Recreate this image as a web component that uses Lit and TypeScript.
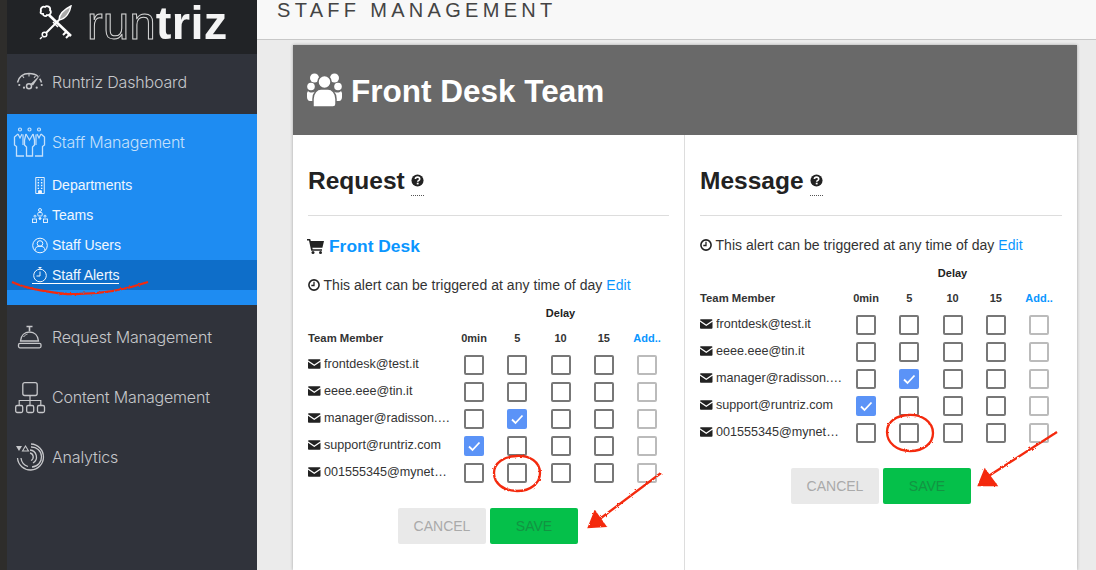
import { LitElement, html, css, svg } from "lit";
import { customElement } from "lit/decorators.js";

const envelope = html`<svg class="env" viewBox="0 0 13 10"><path fill="#222" d="M1.2 0h10.6c.7 0 1.2.5 1.2 1.1L6.5 5.6 0 1.1C0 .5.5 0 1.2 0z"/><path fill="#222" d="M0 2.6l6.5 4.4L13 2.6v6.2c0 .7-.5 1.2-1.2 1.2H1.2C.5 10 0 9.500 0 8.800z"/></svg>`;
const clock = html`<svg class="clk" viewBox="0 0 12 12"><circle cx="6" cy="6" r="5.100" fill="none" stroke="#222" stroke-width="1.600"/><path d="M6 2.800V6.500H3.300" fill="none" stroke="#222" stroke-width="1.300"/></svg>`;
const question = html`<span class="q"><svg viewBox="0 0 14 14" width="13" height="13"><circle cx="7" cy="7" r="6.500" fill="#222"/><path d="M4.700 5.400C4.800 4 5.800 3.400 7 3.400c1.300 0 2.400.8 2.400 2 0 1.800-2.200 1.700-2.200 3" fill="none" stroke="#fff" stroke-width="1.700"/><rect x="6.200" y="9.400" width="2" height="1.800" fill="#fff"/></svg></span>`;

const stroke = (s: unknown) => html`<svg class="ico" viewBox="0 0 30 30" fill="none" stroke="currentColor" stroke-width="1.200">${s}</svg>`;

const icons = {
  gauge: stroke(svg`<path d="M2.500 15.500C4 9.500 8.500 6.500 14 6.500c4 0 7 1 9 3" stroke-width="1.500"/><path d="M26.500 15.500c-.4-1.500-1-2.700-1.800-3.800" stroke-width="1.500"/><path d="M14 7v2.500M7.500 9l1.500 1.800M20.500 9L19 10.800" stroke-width="1.100"/><path d="M15.500 17L25.500 7.500l-7.500 11z" fill="currentColor" stroke="none"/><circle cx="14" cy="19.300" r="2.500" stroke-width="1.500"/><circle cx="4.300" cy="18" r="1.100" fill="currentColor" stroke="none"/><circle cx="9" cy="20.700" r="1.100" fill="currentColor" stroke="none"/><circle cx="21.700" cy="20.700" r="1.100" fill="currentColor" stroke="none"/><circle cx="26.700" cy="18" r="1.100" fill="currentColor" stroke="none"/>`),
  staff: stroke(svg`<circle cx="5" cy="2.500" r="1.500"/><circle cx="14.500" cy="2.500" r="1.500"/><circle cx="24" cy="2.500" r="1.500"/>
    <path d="M3 7L-.5 10v8l2 1.500V29H9" stroke-width="1.300"/><path d="M3 7l2 4 2-4" />
    <path d="M8 7.500V18" /><path d="M11 7l3.500 6 3.500-6" /><path d="M11 7L9.500 13v5l2 2v9h6v-9l2-2v-5L18 7" stroke-width="1.300"/>
    <path d="M22 7l2 4 2-4" /><path d="M21 7.500V18" /><path d="M26 7l3.500 3v8l-2 1.500V29H20" stroke-width="1.300"/>`),
  bell: stroke(svg`<path d="M11.500 4.500h6M14.500 4.500V9" stroke-width="1.600"/><path d="M5.500 19C6 13.500 9.500 10 14.500 10s8.500 3.500 9 9z" stroke-width="1.300"/><path d="M8.500 15c1-1.500 2.300-2.400 4-2.900" stroke-width="1"/><rect x="3.500" y="21.300" width="22.500" height="4.500" rx="1.500" stroke-width="1.300"/>`),
  net: stroke(svg`<rect x="7.800" y=".7" width="14.400" height="12.800" rx="2" stroke-width="1.300"/><path d="M15 13.500V23M4.200 23v-4.500h21.600V23"/><rect x=".7" y="23.500" width="7" height="7" rx="1.500" stroke-width="1.300"/><rect x="11.700" y="23.500" width="7" height="7" rx="1.500" stroke-width="1.300"/><rect x="22.500" y="23.500" width="7" height="7" rx="1.500" stroke-width="1.300"/>`),
  analytics: stroke(svg`<path d="M1 4h6L4 9z" fill="currentColor" stroke="none"/><path d="M7.500 9l3-5 3 5z" stroke-width="1.100"/><path d="M16 2a13 13 0 1 1-13.500 14" stroke-width="1.300"/><path d="M16 5a10 10 0 0 1 1 20" stroke-width="1.300"/><path d="M15 8a7 7 0 0 1 3 13" stroke-width="1.300"/><path d="M6 16a10 10 0 0 0 7 8.500" stroke-width="1.300"/><path d="M15 11a4 4 0 0 1 1 7.500" stroke-width="1.300"/>`),
  building: html`<svg class="sub-ico" viewBox="0 0 16 18" fill="none" stroke="currentColor"><path d="M3.500 .5h9v17h-9z"/><path d="M5.500 3h1.500M9 3h1.500M5.500 6h1.500M9 6h1.500M5.500 9h1.500M9 9h1.500M5.500 12h1.500M9 12h1.500" stroke-width="1.500"/><path d="M6.500 17.500v-3h3v3" fill="currentColor"/></svg>`,
  teams: html`<svg class="sub-ico" viewBox="0 0 16 16" fill="none" stroke="currentColor" stroke-width=".9"><circle cx="8" cy="2.500" r="1.500"/><rect x="5.800" y="5" width="4.400" height="3.500" rx="1"/><rect x=".5" y="11.500" width="4" height="3.500"/><rect x="11.500" y="11.500" width="4" height="3.500"/><circle cx="3" cy="8.700" r="1"/><circle cx="13" cy="8.700" r="1"/><circle cx="8" cy="11" r="1" fill="currentColor"/></svg>`,
  user: html`<svg class="sub-ico" viewBox="0 0 16 16" fill="none" stroke="currentColor"><circle cx="8" cy="8" r="7.300"/><circle cx="8" cy="6" r="2.800"/><path d="M3 13c0-3 2-4.300 5-4.300S13 10 13 13"/></svg>`,
  timer: html`<svg class="sub-ico" viewBox="0 0 16 16" fill="none" stroke="currentColor"><circle cx="8" cy="9" r="6.300"/><path d="M8 1v2M6.500 1h3M8 5v4.500H4.500"/></svg>`,
};

const logoMark = html`<svg class="mark" viewBox="0 0 34 36" fill="none" stroke="#fff">
  <path d="M11 10l22 21" stroke-width="2.600"/>
  <path d="M25 30l3-3M28 33l3-3" stroke-width="2"/>
  <path d="M3 6c-1-3 2-5 4-4 2-2 6 0 5 3 2 2 0 6-3 5-1 2-4 1-4-1-2 0-3-1-2-3z" stroke-width="1.800"/>
  <path d="M8 28L21 15" stroke-width="2"/>
  <path d="M15 17l5 5" stroke-width="1.600"/>
  <path d="M21 15c0-7 6-11 12-14-1 6-5 13-12 14z" fill="#aaa" stroke-width="1.400"/>
  <circle cx="6.500" cy="29.500" r="2.300" stroke-width="1.500"/><path d="M2 34l2-2" stroke-width="1.400"/></svg>`;

const Row = (name: string, checked: number) => html`
  <div class="name">${envelope}<span>${name}</span></div>
  ${[0, 1, 2, 3, 4].map(i => html`<div class="cell"><span class="box ${i === checked ? "on" : ""} ${i === 4 ? "dim" : ""}">
    ${i === checked ? html`<svg viewBox="0 0 20 20" width="20" height="20"><path d="M5 10.500l3.500 3.500 7-7.500" fill="none" stroke="#fff" stroke-width="1.800"/></svg>` : ""}
  </span></div>`)}
`;

@customElement("app-root")
export class AppRoot extends LitElement {
  static styles = css`
    :host { display: block; width: 1096px; height: 570px; overflow: hidden; position: relative; font-family: "Liberation Sans", Arial, sans-serif; background: #ebebeb; color: #222; }
    * { box-sizing: border-box; }
    .page { display: flex; height: 570px; }
    .strip { width: 7px; background: #2e2d2b; }
    .side { width: 250px; background: #30333b; display: flex; flex-direction: column; color: #c6c7ca; flex: none; }
    .logo { height: 54px; background: #212326; display: flex; align-items: flex-start; padding: 5px 0 0 31px; gap: 15px; }
    .mark { width: 34px; height: 36px; }
    .word { font-size: 47px; line-height: 36px; font-weight: 700; color: #f4f4f4; letter-spacing: .3px; will-change: transform; }
    .word i { font-style: normal; color: transparent; -webkit-text-stroke: 1px #d8d8d8; font-weight: 400; }
    .item { height: 60px; display: flex; align-items: center; padding-left: 8px; font-family: Inter, "Liberation Sans", sans-serif; font-weight: 300; font-size: 16px; letter-spacing: -.17px; }
    .item.first { height: 56px; margin-bottom: 4px; }
    .ico { width: 30px; height: 30px; margin-right: 7px; flex: none; overflow: visible; }
    .blue { background: #1e8cf2; color: #c5e0fb; height: 191px; }
    .blue .item { height: 56px; letter-spacing: -.25px; }
    .sub { height: 30px; display: flex; align-items: center; padding-left: 25px; font-size: 14px; color: #f1f7fe; }
    .sub.cur { background: #0e6ec9; }
    .sub a { display: flex; align-items: center; color: inherit; }
    .sub.cur a { border-bottom: 1px solid #fff; }
    .sub-ico { width: 16px; height: 17px; margin-right: 4px; flex: none; }
    .push { margin-top: 2px; }
    .main { flex: 1; display: flex; flex-direction: column; min-width: 0; }
    .top { height: 40px; background: #f8f8f8; border-bottom: 1px solid #c8c8c8; padding-left: 20px; font-size: 20px; letter-spacing: 4.3px; line-height: 20px; color: #444; flex: none; }
    .card { margin: 5px 19px 0 36px; background: #fff; box-shadow: 0 0 3px rgba(0,0,0,.3); flex: 1; display: flex; flex-direction: column; }
    .head { height: 90px; background: #696969; color: #fff; display: flex; align-items: center; padding: 2px 0 0 14px; gap: 9px; font-size: 31.5px; font-weight: 700; flex: none; }
    .head svg { width: 35px; height: 34px; margin-top: -3px; }
    .cols { flex: 1; display: flex; }
    .panel { width: 392px; padding: 31px 15px 0; border-right: 1px solid #ddd; }
    .panel:last-child { border-right: 0; }
    h2 { margin: 0; font-size: 24.5px; line-height: 30px; font-weight: 700; display: flex; color: #222; }
    .q { display: inline-flex; margin-left: 6px; align-items: flex-start; padding-top: 8px; border-bottom: 1px dotted #555; height: 30px; width: 13px; }
    hr { border: 0; border-top: 1px solid #ddd; margin: 19px 0 0; }
    h3 { margin: 18px 0 0; font-size: 17.4px; line-height: 24px; color: #0a96ff; font-weight: 700; display: flex; align-items: center; gap: 5px; margin-left: -1px; }
    h3 svg { width: 17px; height: 15px; }
    .alert { font-size: 14px; line-height: 20px; display: flex; align-items: center; gap: 4px; color: #333; letter-spacing: .04px; margin-left: -.5px; }
    h3 + .alert { margin-top: 17px; }
    hr + .alert { margin-top: 19px; }
    .clk { width: 12px; height: 12px; }
    .grid { display: grid; grid-template-columns: 144.4px repeat(5, 43.25px); grid-template-rows: 20px 28.5px; grid-auto-rows: 27px; margin-top: 8px; font-size: 12.6px; }
    .delay { grid-column: 2 / -1; text-align: center; font-size: 11px; font-weight: 700; line-height: 20px; }
    .delayrow { grid-column: 1 / -1; display: grid; grid-template-columns: subgrid; }
    .hd { font-size: 11px; font-weight: 700; text-align: center; padding-top: 6px; line-height: 18px; color: #333; }
    .hd.l { text-align: left; font-size: 11.3px; }
    .alert a, .hd.add { color: #0a96ff; }
    .name { display: flex; align-items: center; gap: 3.5px; padding-bottom: 3px; min-width: 0; color: #333; }
    .name span { overflow: hidden; text-overflow: ellipsis; white-space: nowrap; flex: 1; min-width: 0; padding-right: 2px; }
    .env { width: 12.500px; height: 10px; flex: none; }
    .cell { display: flex; align-items: center; justify-content: center; }
    .box { width: 20px; height: 20px; border: 2px solid #777; border-radius: 2px; display: block; position: relative; }
    .box.dim { border-color: #bbb; }
    .box.on { background: #5b93f7; border: 0; }
    .btns { display: flex; gap: 4px; justify-content: center; margin: 21.5px 0 0 0; }
    .panel:first-child .btns { margin-right: 1px; }
    .btn { width: 88px; height: 36px; border-radius: 2px; display: flex; align-items: center; justify-content: center; font-size: 14px; }
    .cancel { background: #e9e9e9; color: #aaa; }
    .save { background: #05c04a; color: #129442; }
    .ink { position: absolute; inset: 0; width: 1096px; height: 570px; pointer-events: none; }
  `;

  panel(title: string, front: boolean) {
    return html`<section class="panel">
      <h2>${title}${question}</h2>
      <hr />
      ${front ? html`<h3><svg viewBox="0 0 17 15"><path fill="#222" d="M0 0h3.200l.6 2H17l-1.600 6.800H5.300l.4 1.500H15v1.500H4.200L2 1.500H0z"/><circle cx="6" cy="13.500" r="1.500" fill="#222"/><circle cx="13.500" cy="13.500" r="1.500" fill="#222"/></svg>Front Desk</h3>` : ""}
      <div class="alert">${clock}<span>This alert can be triggered at any time of day <a>Edit</a></span></div>
      <div class="grid">
        <div class="delayrow"><div></div><div class="delay">Delay</div></div>
        <div class="hd l">Team Member</div><div class="hd">0min</div><div class="hd">5</div><div class="hd">10</div><div class="hd">15</div><div class="hd add">Add..</div>
        ${Row("frontdesk@test.it", -1)}
        ${Row("eeee.eee@tin.it", -1)}
        ${Row("manager@radisson.com", 1)}
        ${Row("support@runtriz.com", 0)}
        ${Row("001555345@mynetwork.it", -1)}
      </div>
      <div class="btns"><div class="btn cancel">CANCEL</div><div class="btn save">SAVE</div></div>
    </section>`;
  }

  render() {
    return html`
      <div class="page">
        <div class="strip"></div>
        <aside class="side">
          <div class="logo">${logoMark}<div class="word"><i>run</i>triz</div></div>
          <div class="item first">${icons.gauge}Runtriz Dashboard</div>
          <div class="blue">
            <div class="item">${icons.staff}Staff Management</div>
            <div class="sub"><a>${icons.building}Departments</a></div>
            <div class="sub"><a>${icons.teams}Teams</a></div>
            <div class="sub"><a>${icons.user}Staff Users</a></div>
            <div class="sub cur"><a>${icons.timer}Staff Alerts</a></div>
          </div>
          <div class="item push">${icons.bell}Request Management</div>
          <div class="item">${icons.net}Content Management</div>
          <div class="item">${icons.analytics}Analytics</div>
        </aside>
        <main class="main">
          <div class="top">STAFF MANAGEMENT</div>
          <div class="card">
            <div class="head">
              <svg viewBox="0 0 35 34" fill="#fff">
                <circle cx="7.500" cy="5" r="4.500"/><circle cx="27.500" cy="5" r="4.500"/>
                <circle cx="4" cy="13.500" r="3.800"/><circle cx="31" cy="13.500" r="3.800"/>
                <path d="M1 18c2 2 5 2 8 0l2 2c-3 2-4 5-4 8H3c-2 0-3-2-3-4v-4zM34 18c-2 2-5 2-8 0l-2 2c3 2 4 5 4 8h4c2 0 3-2 3-4v-4z"/>
                <circle cx="17.500" cy="9" r="6.500" stroke="#696969" stroke-width="1.500"/>
                <path d="M6 34v-8c0-6 4-10 8-10h7c4 0 8 4 8 10v5c0 2-1 3-3 3z" stroke="#696969" stroke-width="1.500"/>
              </svg>
              Front Desk Team
            </div>
            <div class="cols">${this.panel("Request", true)}${this.panel("Message", false)}</div>
          </div>
        </main>
      </div>
      <svg class="ink" viewBox="0 0 1096 570" fill="none" stroke="#f4290d" stroke-width="2.300">
        <defs><filter id="rough" x="-5%" y="-5%" width="110%" height="110%"><feTurbulence type="fractalNoise" baseFrequency=".35" numOctaves="2" seed="4"/><feDisplacementMap in="SourceGraphic" scale="2.500"/></filter></defs>
        <g filter="url(#rough)">
          <path d="M12 282c15 7 34 10 55 12 30 1 58-4 81-12"/>
          <path d="M517 456c-13 0-23 7-23 17 0 10 9 18 23 18 14 0 23-8 23-18 0-11-10-18-24-17"/>
          <path d="M910 415c-14 0-23 7-23 17 0 11 10 19 23 19 14 0 23-8 23-18 0-11-11-19-25-18"/>
          <path d="M661 473l-64 48"/><path d="M589 527l6-15 10 14z" fill="#f4290d"/>
          <path d="M1057 432l-70 45"/><path d="M979 485l6-15 11 15z" fill="#f4290d"/>
        </g>
      </svg>
    `;
  }
}
